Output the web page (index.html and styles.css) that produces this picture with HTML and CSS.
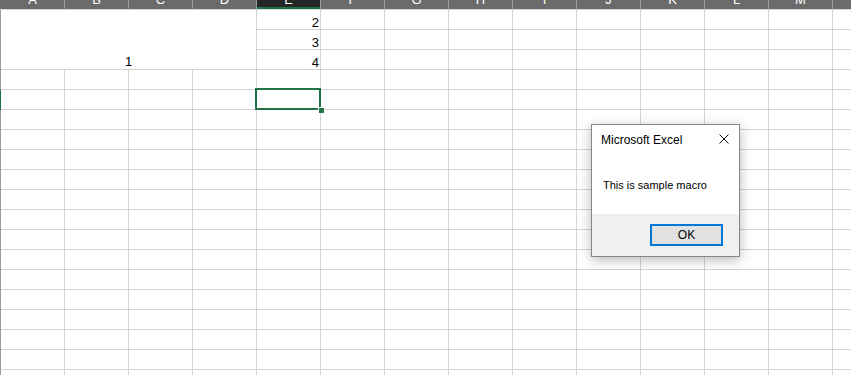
FILE: index.html
```html
<!DOCTYPE html>
<html lang="en">
<head>
  <meta charset="UTF-8">
  <meta name="viewport" content="width=device-width, initial-scale=1.0">
  <title>Book1 - Excel</title>
  <link rel="stylesheet" href="styles.css">
</head>
<body>
  <div class="sheet">
    <div class="rh top"></div><div class="ch"><span>A</span></div><div class="ch"><span>B</span></div><div class="ch"><span>C</span></div><div class="ch"><span>D</span></div><div class="ch active"><span>E</span></div><div class="ch"><span>F</span></div><div class="ch"><span>G</span></div><div class="ch"><span>H</span></div><div class="ch"><span>I</span></div><div class="ch"><span>J</span></div><div class="ch"><span>K</span></div><div class="ch"><span>L</span></div><div class="ch"><span>M</span></div><div class="ch"><span>N</span></div>
    <div class="rh"></div><div class="merged">1</div><div class="num">2</div><div></div><div></div><div></div><div></div><div></div><div></div><div></div><div></div><div></div>
    <div class="rh"></div><div class="num">3</div><div></div><div></div><div></div><div></div><div></div><div></div><div></div><div></div><div></div>
    <div class="rh"></div><div class="num">4</div><div></div><div></div><div></div><div></div><div></div><div></div><div></div><div></div><div></div>
    <div class="rh"></div><div></div><div></div><div></div><div></div><div></div><div></div><div></div><div></div><div></div><div></div><div></div><div></div><div></div><div></div>
    <div class="rh sel"></div><div></div><div></div><div></div><div></div><div class="selected"></div><div></div><div></div><div></div><div></div><div></div><div></div><div></div><div></div><div></div>
    <div class="rh"></div><div></div><div></div><div></div><div></div><div></div><div></div><div></div><div></div><div></div><div></div><div></div><div></div><div></div><div></div>
    <div class="rh"></div><div></div><div></div><div></div><div></div><div></div><div></div><div></div><div></div><div></div><div></div><div></div><div></div><div></div><div></div>
    <div class="rh"></div><div></div><div></div><div></div><div></div><div></div><div></div><div></div><div></div><div></div><div></div><div></div><div></div><div></div><div></div>
    <div class="rh"></div><div></div><div></div><div></div><div></div><div></div><div></div><div></div><div></div><div></div><div></div><div></div><div></div><div></div><div></div>
    <div class="rh"></div><div></div><div></div><div></div><div></div><div></div><div></div><div></div><div></div><div></div><div></div><div></div><div></div><div></div><div></div>
    <div class="rh"></div><div></div><div></div><div></div><div></div><div></div><div></div><div></div><div></div><div></div><div></div><div></div><div></div><div></div><div></div>
    <div class="rh"></div><div></div><div></div><div></div><div></div><div></div><div></div><div></div><div></div><div></div><div></div><div></div><div></div><div></div><div></div>
    <div class="rh"></div><div></div><div></div><div></div><div></div><div></div><div></div><div></div><div></div><div></div><div></div><div></div><div></div><div></div><div></div>
    <div class="rh"></div><div></div><div></div><div></div><div></div><div></div><div></div><div></div><div></div><div></div><div></div><div></div><div></div><div></div><div></div>
    <div class="rh"></div><div></div><div></div><div></div><div></div><div></div><div></div><div></div><div></div><div></div><div></div><div></div><div></div><div></div><div></div>
    <div class="rh"></div><div></div><div></div><div></div><div></div><div></div><div></div><div></div><div></div><div></div><div></div><div></div><div></div><div></div><div></div>
    <div class="rh"></div><div></div><div></div><div></div><div></div><div></div><div></div><div></div><div></div><div></div><div></div><div></div><div></div><div></div><div></div>
    <div class="rh"></div><div></div><div></div><div></div><div></div><div></div><div></div><div></div><div></div><div></div><div></div><div></div><div></div><div></div><div></div>
    <div class="rh"></div><div></div><div></div><div></div><div></div><div></div><div></div><div></div><div></div><div></div><div></div><div></div><div></div><div></div><div></div>
  </div>

  <div class="msgbox">
    <div class="msg-title">
      <span>Microsoft Excel</span>
      <svg class="msg-close" width="10" height="10" viewBox="0 0 10 10">
        <path d="M0.5 0.5 L9.5 9.5 M9.5 0.5 L0.5 9.5" stroke="#111" stroke-width="1" fill="none"/>
      </svg>
    </div>
    <div class="msg-text">This is sample macro</div>
    <div class="msg-foot">
      <button class="msg-ok">OK</button>
    </div>
  </div>
</body>
</html>
```

FILE: styles.css
```css
html, body { margin: 0; height: 100%; overflow: hidden; background: #fff; }
body { font-family: "Liberation Sans", Arial, sans-serif; position: relative; }

.sheet {
  display: grid;
  grid-template-columns: 1px repeat(13, 64px) 64px;
  grid-template-rows: 10px;
  grid-auto-rows: 20px;
}
.sheet > div {
  box-sizing: border-box;
  border-right: 1px solid #d4d4d4;
  border-bottom: 1px solid #d4d4d4;
}
.sheet > .rh { border: 0; background: #9b9b9b; }
.sheet > .rh.top { background: #6b6b6b; border-bottom: 1px solid #d8d8d8; }
.sheet > .rh.sel { background: #217346; }

/* column headers are scrolled half out of view, only the feet of the letters show */
.sheet > .ch {
  background: #6b6b6b;
  border-right-color: #9a9a9a;
  border-bottom-color: #d8d8d8;
  overflow: hidden;
  display: flex;
  justify-content: center;
  align-items: flex-end;
  color: #fff;
  font-size: 13px;
  line-height: 13px;
}
.ch span { margin-bottom: 3px; }
.sheet > .ch.active { background: #262626; box-shadow: inset 0 -2px 0 #217346; }

.sheet > .merged {
  grid-column: span 4;
  grid-row: span 3;
  display: flex;
  justify-content: center;
  align-items: flex-end;
  font-size: 13px;
  line-height: 13px;
  padding-bottom: 1px;
  color: #000;
}
.sheet > .num {
  display: flex;
  justify-content: flex-end;
  align-items: flex-end;
  font-size: 13px;
  line-height: 13px;
  padding-right: 1px;
  color: #000;
}
.sheet > .selected { position: relative; }
.selected::after {
  content: "";
  position: absolute;
  top: -2px; left: -2px; right: -1px; bottom: -1px;
  border: 2px solid #217346;
}
.selected::before {
  content: "";
  position: absolute;
  right: -4px; bottom: -4px;
  width: 5px; height: 5px;
  background: #217346;
  border-left: 1px solid #fff;
  border-top: 1px solid #fff;
  z-index: 1;
}

.msgbox {
  position: absolute;
  left: 591px;
  top: 124px;
  width: 149px;
  height: 133px;
  box-sizing: border-box;
  border: 1px solid #868686;
  background: #fff;
  box-shadow: 0 3px 12px rgba(0,0,0,0.28);
  display: flex;
  flex-direction: column;
}
.msg-title {
  display: flex;
  justify-content: space-between;
  align-items: flex-start;
  padding: 7px 10px 0 9px;
  font-size: 12px;
  line-height: 16px;
  color: #000;
}
.msg-close { margin-top: 2px; }
.msg-text {
  margin-top: 30px;
  padding-left: 11px;
  font-size: 11px;
  line-height: 14px;
  color: #000;
}
.msg-foot {
  margin-top: auto;
  height: 42px;
  box-sizing: border-box;
  background: #f0f0f0;
  display: flex;
  justify-content: flex-end;
  align-items: flex-start;
  padding: 10px 16px 0 0;
}
.msg-ok {
  width: 73px;
  height: 22px;
  box-sizing: border-box;
  border: 2px solid #0078d7;
  background: #e1e1e1;
  font-family: "Liberation Sans", Arial, sans-serif;
  font-size: 12px;
  color: #000;
  padding: 0;
}
```
